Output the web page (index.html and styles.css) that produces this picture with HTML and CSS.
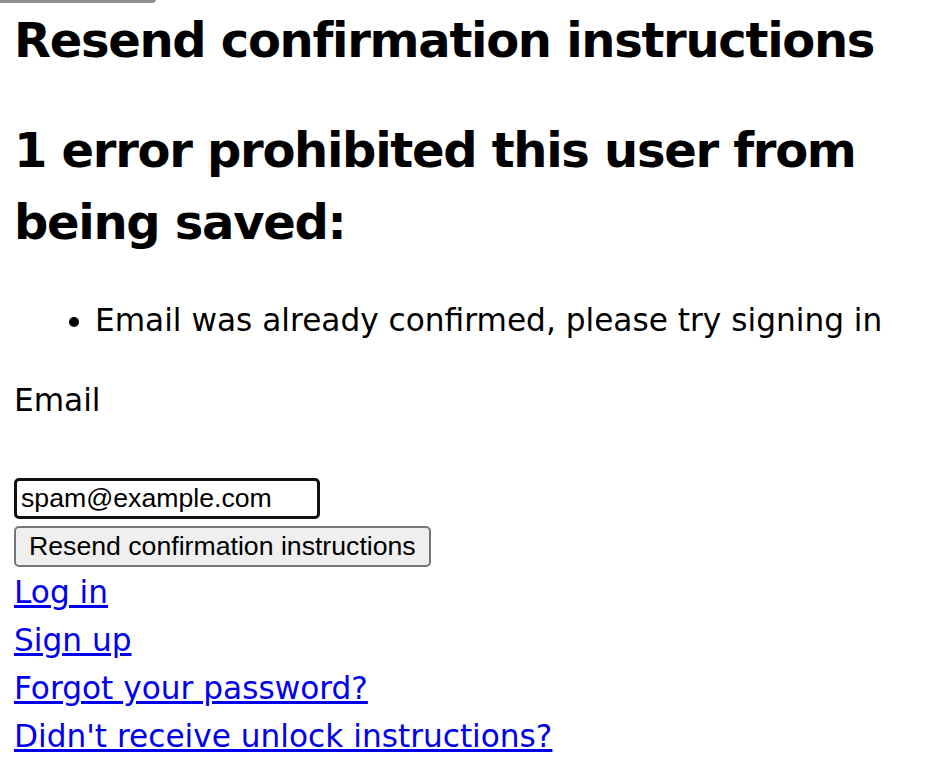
FILE: index.html
```
<!DOCTYPE html>
<html lang="en">
<head>
    <meta charset="UTF-8">
    <title>Resend confirmation instructions</title>
    <link rel="stylesheet" href="styles.css">
</head>
<body>
<div class="notice-edge"></div>

<h2 class="page-title">Resend confirmation instructions</h2>

<form class="new_user" id="new_user" action="#" method="post">
    <div id="error_explanation">
        <h2>1 error prohibited this user from being saved:</h2>
        <ul>
            <li>Email was already confirmed, please try signing in</li>
        </ul>
    </div>

    <div class="field">
        <div class="field_with_errors"><label for="user_email">Email</label></div><br />
        <div class="field_with_errors"><input autofocus="autofocus" autocomplete="email" type="email" value="spam@example.com" name="user[email]" id="user_email" /></div>
    </div>

    <div class="actions">
        <input type="submit" name="commit" value="Resend confirmation instructions" />
    </div>
</form>

<div class="links">
    <a href="#">Log in</a><br />
    <a href="#">Sign up</a><br />
    <a href="#">Forgot your password?</a><br />
    <a href="#">Didn't receive unlock instructions?</a><br />
</div>

</body>
</html>
```

FILE: styles.css
```
body{
    margin:0 14px;
    font-family: "DejaVu Sans", "Noto Sans CJK JP", sans-serif;
    font-size: 31.2px;
    line-height: 48px;
    color: #000;
    background: #fff;
}
.notice-edge{
    position: absolute;
    top: -5px;
    left: -10px;
    width: 166px;
    height: 8px;
    border-radius: 4px;
    background-color: #8e8e8e;
}
h2{
    font-size: 48px;
    line-height: 72px;
    letter-spacing: -1.3px;
    font-weight: bold;
    margin: 38px 0;
}
.page-title{
    margin-top: 4px;
}
ul{
    margin: 32px 0;
    padding-left: 81px;
}
.field_with_errors{
    display: block;
}
input{
    font-family: "Liberation Sans", Arial, sans-serif;
    font-size: 26.67px;
    color: #000;
}
#user_email{
    width: 292px;
    height: 35px;
    padding: 0 4px;
    border: 3px solid #111;
    border-radius: 5px;
    outline: none;
    box-sizing: content-box;
    vertical-align: baseline;
}
.actions input{
    height: 41px;
    padding: 0 13px;
    border: 2px solid #767676;
    border-radius: 5px;
    background-color: #efefef;
    box-sizing: border-box;
}
a{
    color: #0000ee;
    text-decoration: underline;
}
```
